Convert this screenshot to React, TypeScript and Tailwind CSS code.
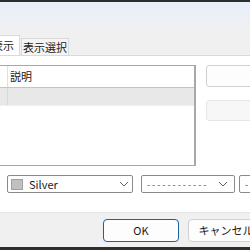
import React from 'react';

const ChevronDown = () => (
  <svg width="10" height="6" viewBox="0 0 10 6" className="shrink-0">
    <path d="M1 1 L5 5 L9 1" fill="none" stroke="#606060" strokeWidth="1" />
  </svg>
);

export default function App() {
  return (
    <div
      className="flex h-[250px] w-[250px] flex-col overflow-hidden bg-[#f0f0f0] text-[11px] text-[#1a1a1a]"
      style={{ fontFamily: '"Noto Sans CJK JP", "Noto Sans", sans-serif' }}
    >
      {/* window edge */}
      <div className="h-[2px] shrink-0 bg-[#2e2e2e]" />
      <div className="h-[28px] shrink-0 bg-gradient-to-b from-[#e8effb] to-[#f0f0f0]" />

      {/* Tab strip */}
      <div className="flex h-[25px] shrink-0 items-end">
        <div className="-ml-[26px] flex h-[20px] w-[46px] shrink-0 items-center justify-end border border-b-0 border-[#d9d9d9] bg-white pr-[5px] leading-none whitespace-nowrap">
          表示
        </div>
        <div className="ml-[1px] flex h-[17px] w-[48px] shrink-0 items-center justify-center border border-b-0 border-[#d9d9d9] bg-[#f5f5f5] leading-none whitespace-nowrap">
          表示選択
        </div>
      </div>

      {/* Tab panel */}
      <div className="flex h-[157px] shrink-0 flex-col border-t border-[#d9d9d9] bg-white">
        <div className="mt-[9px] flex">
          {/* List view */}
          <div className="-ml-[10px] flex h-[101px] w-[206px] shrink-0 flex-col border border-r-2 border-[#a8a8a8] bg-white">
            <div className="flex h-[22px] border-b border-[#c4c4c4]">
              <div className="w-[17px] shrink-0 border-r border-[#e0e0e0]" />
              <div className="flex items-center pl-[2px] leading-none">説明</div>
            </div>
            <div className="flex h-[18px] border-b border-[#f0f0f0] bg-[#e8e8e8]">
              <div className="w-[17px] shrink-0 border-r border-[#d8d8d8]" />
            </div>
          </div>

          {/* Side buttons */}
          <div className="ml-[10px] flex shrink-0 flex-col">
            <div className="h-[22px] w-[60px] rounded-[3px] border border-[#d0d0d0] bg-[#fdfdfd]" />
            <div className="mt-[13px] h-[21px] w-[60px] rounded-[3px] border border-[#e6e6e6] bg-[#f7f7f7]" />
          </div>
        </div>

        {/* Combo row */}
        <div className="mt-[9px] flex">
          <div className="ml-[7px] flex h-[18px] w-[126px] shrink-0 items-center rounded-[2px] border border-[#8a8a8a] bg-white pl-[3px] pr-[3px]">
            <div className="h-[11px] w-[12px] shrink-0 border border-[#a0a0a0] bg-[#c0c0c0]" />
            <span className="ml-[6px] flex-1 leading-none">Silver</span>
            <ChevronDown />
          </div>
          <div className="ml-[8px] flex h-[18px] w-[94px] shrink-0 items-center rounded-[2px] border border-[#8a8a8a] bg-white pl-[5px] pr-[6px]">
            <span className="flex-1 whitespace-nowrap text-[9px] leading-none tracking-[2px] text-[#505050]">------------</span>
            <ChevronDown />
          </div>
          <div className="ml-[4px] flex h-[18px] w-[40px] shrink-0 items-center rounded-[2px] border border-[#8a8a8a] bg-white pl-[5px]">
            <span className="text-[9px] leading-none text-[#505050]">-</span>
          </div>
        </div>
      </div>

      {/* Footer */}
      <div className="flex h-[35px] shrink-0 items-center border-t border-[#e3e3e3] bg-[#f0f0f0]">
        <button className="ml-[103px] flex h-[23px] w-[76px] shrink-0 items-center justify-center rounded-[4px] border border-[#1d5f9a] bg-[#fdfdfd] leading-none">
          OK
        </button>
        <button className="ml-[9px] flex h-[23px] w-[76px] shrink-0 items-center justify-center rounded-[4px] border border-[#d0d0d0] bg-[#fdfdfd] leading-none whitespace-nowrap">
          キャンセル
        </button>
      </div>
      <div className="h-[3px] shrink-0 bg-[#2e2e2e]" />
    </div>
  );
}
